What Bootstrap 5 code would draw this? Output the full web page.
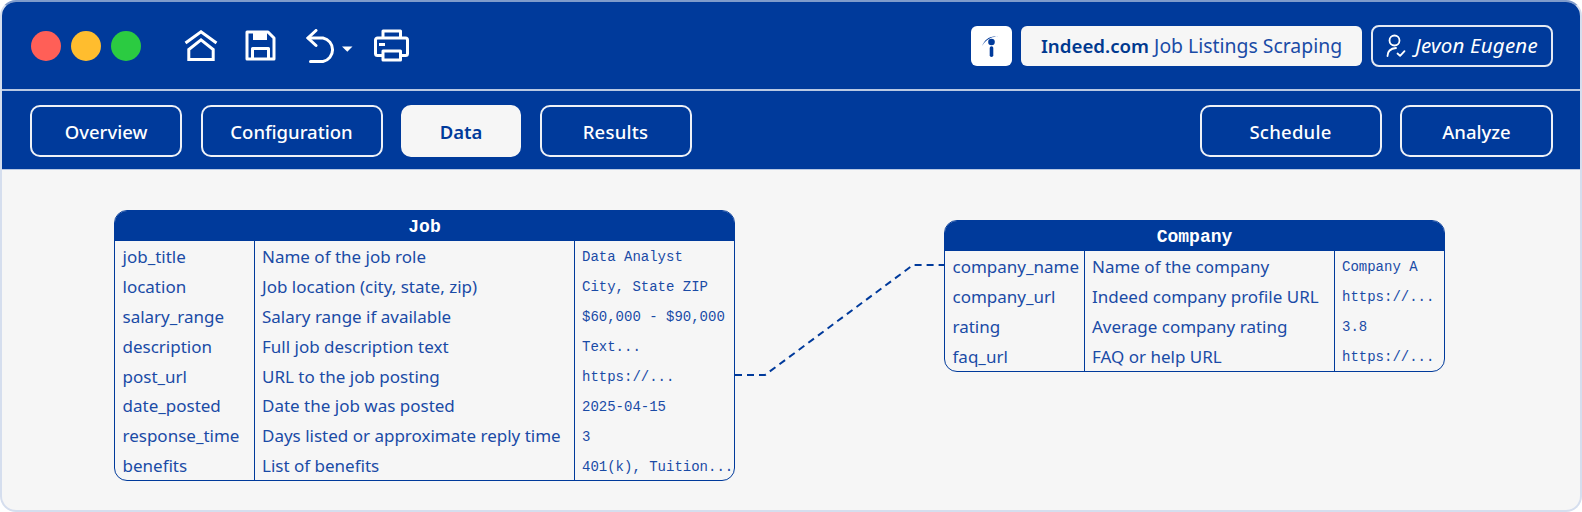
<!doctype html>
<html lang="en">
<head>
<meta charset="utf-8">
<title>Indeed.com Job Listings Scraping</title>
<link href="https://cdn.jsdelivr.net/npm/bootstrap@5.3.0/dist/css/bootstrap.min.css" rel="stylesheet">
<style>
:root{--navy:#003a9b;--ink:#1a4ba6;--paper:#f6f6f6;}
html,body{margin:0;height:512px;overflow:hidden;background:#fff;}
body{font-family:"Noto Sans","Liberation Sans",sans-serif;}
.app-frame{width:1582px;height:512px;border:2px solid #d5deee;border-top-color:#7f9bcb;border-radius:16px;overflow:hidden;background:var(--paper);}
.top-strip{height:89px;background:var(--navy);border-bottom:2px solid #b9c8e3;padding:0 27px 0 29px;flex:none;}
.tab-strip{height:79px;background:var(--navy);padding:2px 27px 0 28px;flex:none;border-bottom:1px solid #b9c8e3;}
.light-row{gap:10px;}
.light{width:30px;height:30px;border-radius:50%;}
.l-red{background:#ff5f57;}.l-amber{background:#ffbd2e;}.l-green{background:#2bcb41;}
.tool-row{margin-left:43px;}
.tool-row svg{display:block;}
.tool-save{margin-left:27px;}.tool-undo{margin-left:30px;}.tool-print{margin-left:20px;}
.logo-box{width:41px;height:40px;background:#fff;border-radius:6px;}
.title-box{width:341px;height:40px;background:var(--paper);border-radius:6px;color:var(--ink);font-size:19.4px;margin-left:9px;}
.title-box b{font-weight:600;color:#00398f;font-size:18.7px;}
.user-box{width:182px;height:42px;border:2px solid #e4e9f3;border-radius:8px;color:#fff;font-size:20.5px;font-style:italic;margin-left:9px;gap:8px;letter-spacing:.2px;}
.tab-btn{height:52px;border:2px solid #eef1f7;border-radius:10px;color:#fff;background:transparent;font-size:18.5px;font-weight:500;padding:1px 0 0;display:flex;align-items:center;justify-content:center;}
.tab-btn:hover{color:#fff;}
.tab-wide{letter-spacing:.25px;}
.tab-on{background:var(--paper);color:var(--navy);border-color:var(--paper);font-weight:600;}
.tab-on:hover{color:var(--navy);}
.w-overview{width:152px;}.w-config{width:182px;}.w-data{width:120px;}.w-results{width:152px;}.w-sched{width:182px;}.w-analyze{width:153px;}
.tab-gap{gap:18.5px;}
.canvas{position:relative;flex:1 1 auto;}
.entity{position:absolute;background:var(--paper);border:1px solid var(--navy);border-radius:13px;overflow:hidden;}
.entity-job{left:112px;top:40px;width:621px;}
.entity-company{left:942px;top:50px;width:501px;}
.entity-head{height:30px;background:var(--navy);color:#fff;font-weight:700;font-size:18px;line-height:33px;text-align:center;font-family:"Liberation Mono",monospace;}
.entity table{border-collapse:collapse;table-layout:fixed;width:100%;color:var(--ink);}
.entity td{height:29.9px;padding:1px 0 0 7.5px;font-size:17px;white-space:nowrap;overflow:visible;line-height:1;}
.entity td+td{border-left:1px solid var(--navy);}
.entity td.mono{font-family:"Liberation Mono","DejaVu Sans Mono",monospace;font-size:14px;padding-top:3px;}
.wire{position:absolute;left:0;top:0;width:1578px;height:340px;pointer-events:none;}
.col-j1{width:139px;}.col-j2{width:320px;}.col-c1{width:139px;}.col-c2{width:250px;}
</style>
</head>
<body>
<div class="app-frame d-flex flex-column">
  <div class="top-strip d-flex align-items-center">
    <div class="d-flex light-row">
      <div class="light l-red"></div><div class="light l-amber"></div><div class="light l-green"></div>
    </div>
    <div class="tool-row d-flex align-items-center">
      <svg width="34" height="32" viewBox="0 0 34 32" fill="none" stroke="#fff" stroke-width="3" stroke-linejoin="miter"><path d="M1.500 13 17 1.800 32.500 13"/><path d="M4.800 29.500V19.500L17 9.800l12.200 9.700v10z"/></svg>
      <svg class="tool-save" width="31" height="31" viewBox="0 0 31 31" fill="none" stroke="#fff" stroke-width="3" stroke-linejoin="round"><path d="M2 2h21l6 6v21H2z"/><path d="M8 3h14v7H8z" fill="#fff" stroke="none"/><path d="M7.500 29V18.500h16V29"/></svg>
      <svg class="tool-undo" width="48" height="34" viewBox="0 0 48 34" fill="none" stroke="#fff" stroke-width="3" stroke-linecap="round"><path d="M10 1.500 2 9l8 7.500"/><path d="M2.500 9H17a12 12 0 0 1 0 23.500H4.500"/><path d="M36 17.500h10.500L41.300 22.800z" fill="#fff" stroke="none"/></svg>
      <svg class="tool-print" width="35" height="33" viewBox="0 0 35 33" fill="none" stroke="#fff" stroke-width="3" stroke-linejoin="round"><path d="M9 9V2h17.500v7"/><path d="M9 26.500H3.500A2 2 0 0 1 1.500 24.500V11a2 2 0 0 1 2-2h28a2 2 0 0 1 2 2v13.500a2 2 0 0 1-2 2H26.500"/><path d="M9 22h17.500v9H9z"/><path d="M5 14h6v3H5z" fill="#fff" stroke="none"/></svg>
    </div>
    <div class="ms-auto d-flex align-items-center">
      <div class="logo-box d-flex align-items-center justify-content-center">
        <svg width="24" height="28" viewBox="0 0 24 28"><path d="M2.200 14C4.500 7 11 2.800 18.200 5 12 4 6 7.500 2.200 14z" fill="#003a9b"/><circle cx="11.500" cy="10" r="3.300" fill="#003a9b"/><rect x="9.700" y="14.200" width="3.600" height="10.800" rx="1.800" fill="#003a9b"/></svg>
      </div>
      <div class="title-box d-flex align-items-center justify-content-center"><span><b>Indeed.com</b> Job Listings Scraping</span></div>
      <div class="user-box d-flex align-items-center justify-content-center">
        <svg width="21" height="24" viewBox="0 0 21 24" fill="none" stroke="#fff" stroke-width="1.800" stroke-linecap="round" stroke-linejoin="round"><circle cx="8.500" cy="6.500" r="5"/><path d="M1.500 22c0-4.500 3-7.500 8.500-8"/><path d="M11.500 19.500l2.600 2.400 4.400-4.800"/></svg>
        <span>Jevon Eugene</span>
      </div>
    </div>
  </div>
  <div class="tab-strip d-flex align-items-center">
    <div class="d-flex tab-gap">
      <a class="btn tab-btn w-overview" href="#">Overview</a>
      <a class="btn tab-btn w-config" href="#">Configuration</a>
      <a class="btn tab-btn tab-on w-data" href="#">Data</a>
      <a class="btn tab-btn tab-wide w-results" href="#">Results</a>
    </div>
    <div class="ms-auto d-flex tab-gap">
      <a class="btn tab-btn tab-wide w-sched" href="#">Schedule</a>
      <a class="btn tab-btn w-analyze" href="#">Analyze</a>
    </div>
  </div>
  <div class="canvas">
    <svg class="wire" viewBox="0 0 1578 340" fill="none"><path d="M733 205H763L911 95H942" stroke="#003a9b" stroke-width="2" stroke-dasharray="7 5"/></svg>
    <div class="entity entity-job">
      <div class="entity-head">Job</div>
      <table>
        <colgroup><col class="col-j1"><col class="col-j2"><col></colgroup>
        <tr><td>job_title</td><td>Name of the job role</td><td class="mono">Data Analyst</td></tr>
        <tr><td>location</td><td>Job location (city, state, zip)</td><td class="mono">City, State ZIP</td></tr>
        <tr><td>salary_range</td><td>Salary range if available</td><td class="mono">$60,000 - $90,000</td></tr>
        <tr><td>description</td><td>Full job description text</td><td class="mono">Text...</td></tr>
        <tr><td>post_url</td><td>URL to the job posting</td><td class="mono">https://...</td></tr>
        <tr><td>date_posted</td><td>Date the job was posted</td><td class="mono">2025-04-15</td></tr>
        <tr><td>response_time</td><td>Days listed or approximate reply time</td><td class="mono">3</td></tr>
        <tr><td>benefits</td><td>List of benefits</td><td class="mono">401(k), Tuition...</td></tr>
      </table>
    </div>
    <div class="entity entity-company">
      <div class="entity-head">Company</div>
      <table>
        <colgroup><col class="col-c1"><col class="col-c2"><col></colgroup>
        <tr><td>company_name</td><td>Name of the company</td><td class="mono">Company A</td></tr>
        <tr><td>company_url</td><td>Indeed company profile URL</td><td class="mono">https://...</td></tr>
        <tr><td>rating</td><td>Average company rating</td><td class="mono">3.8</td></tr>
        <tr><td>faq_url</td><td>FAQ or help URL</td><td class="mono">https://...</td></tr>
      </table>
    </div>
  </div>
</div>
<script src="https://cdn.jsdelivr.net/npm/bootstrap@5.3.0/dist/js/bootstrap.bundle.min.js"></script>
</body>
</html>
